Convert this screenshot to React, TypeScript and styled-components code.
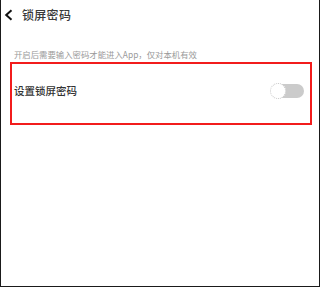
import React, { FC, useState } from "react";
import styled, { createGlobalStyle } from "styled-components";

const GlobalStyle = createGlobalStyle`
  html, body {
    margin: 0;
    padding: 0;
    background: #fff;
  }
  body {
    font-family: "Noto Sans CJK SC", "Noto Sans", sans-serif;
  }
`;

const App: FC = () => {
  const [locked, setLocked] = useState(false);

  return (
    <>
      <GlobalStyle />
      <StyledPage>
        <StyledHeader>
          <StyledBack aria-label="back">
            <svg width="9" height="12" viewBox="0 0 9 12">
              <path d="M7.5 1.2 L2.2 6 L7.5 10.8" fill="none" stroke="#111" strokeWidth="2" />
            </svg>
          </StyledBack>
          <StyledTitle>锁屏密码</StyledTitle>
        </StyledHeader>

        <StyledHint>开启后需要输入密码才能进入App，仅对本机有效</StyledHint>

        <StyledHighlight>
          <StyledLabel>设置锁屏密码</StyledLabel>
          <StyledSwitch $on={locked} onClick={() => setLocked(!locked)}>
            <StyledTrack $on={locked} />
            <StyledKnob $on={locked} />
          </StyledSwitch>
        </StyledHighlight>
      </StyledPage>
    </>
  );
};

export default App;

const StyledPage = styled.div`
  width: 320px;
  height: 287px;
  box-sizing: border-box;
  border: 1px solid #1a1a1a;
  border-top: none;
  background: #fff;
  overflow: hidden;
`;
const StyledHeader = styled.header`
  height: 30px;
  display: flex;
  align-items: center;
  padding-left: 3px;
`;
const StyledBack = styled.span`
  display: flex;
  width: 9px;
  height: 12px;
  margin-right: 9px;
`;
const StyledTitle = styled.h1`
  margin: 0;
  font-size: 12px;
  line-height: 14px;
  font-weight: 500;
  color: #3a3a3a;
  letter-spacing: 0.3px;
`;
const StyledHint = styled.p`
  margin: 18px 0 0;
  padding-left: 13px;
  font-size: 8.4px;
  line-height: 12px;
  color: #9a9a9a;
`;
const StyledHighlight = styled.div`
  width: 302px;
  height: 63px;
  box-sizing: border-box;
  margin: 2px 0 0 9px;
  border: 2px solid #f21c1c;
  display: flex;
  align-items: center;
  justify-content: space-between;
  padding: 0 6px 6px 2px;
`;
const StyledLabel = styled.span`
  font-size: 10.5px;
  line-height: 14px;
  font-weight: 500;
  color: #333;
`;
const StyledSwitch = styled.div<{ $on: boolean }>`
  position: relative;
  width: 34px;
  height: 16px;
  cursor: pointer;
`;
const StyledTrack = styled.div<{ $on: boolean }>`
  position: absolute;
  left: 6px;
  right: 0;
  top: 1px;
  height: 14px;
  border-radius: 7px;
  background: ${(p) => (p.$on ? "#4cd964" : "#cbcbcb")};
`;
const StyledKnob = styled.div<{ $on: boolean }>`
  position: absolute;
  top: 0;
  left: ${(p) => (p.$on ? "18px" : "0")};
  width: 16px;
  height: 16px;
  box-sizing: border-box;
  border-radius: 50%;
  background: #fff;
  border: 1px dotted #c4c4c4;
`;
